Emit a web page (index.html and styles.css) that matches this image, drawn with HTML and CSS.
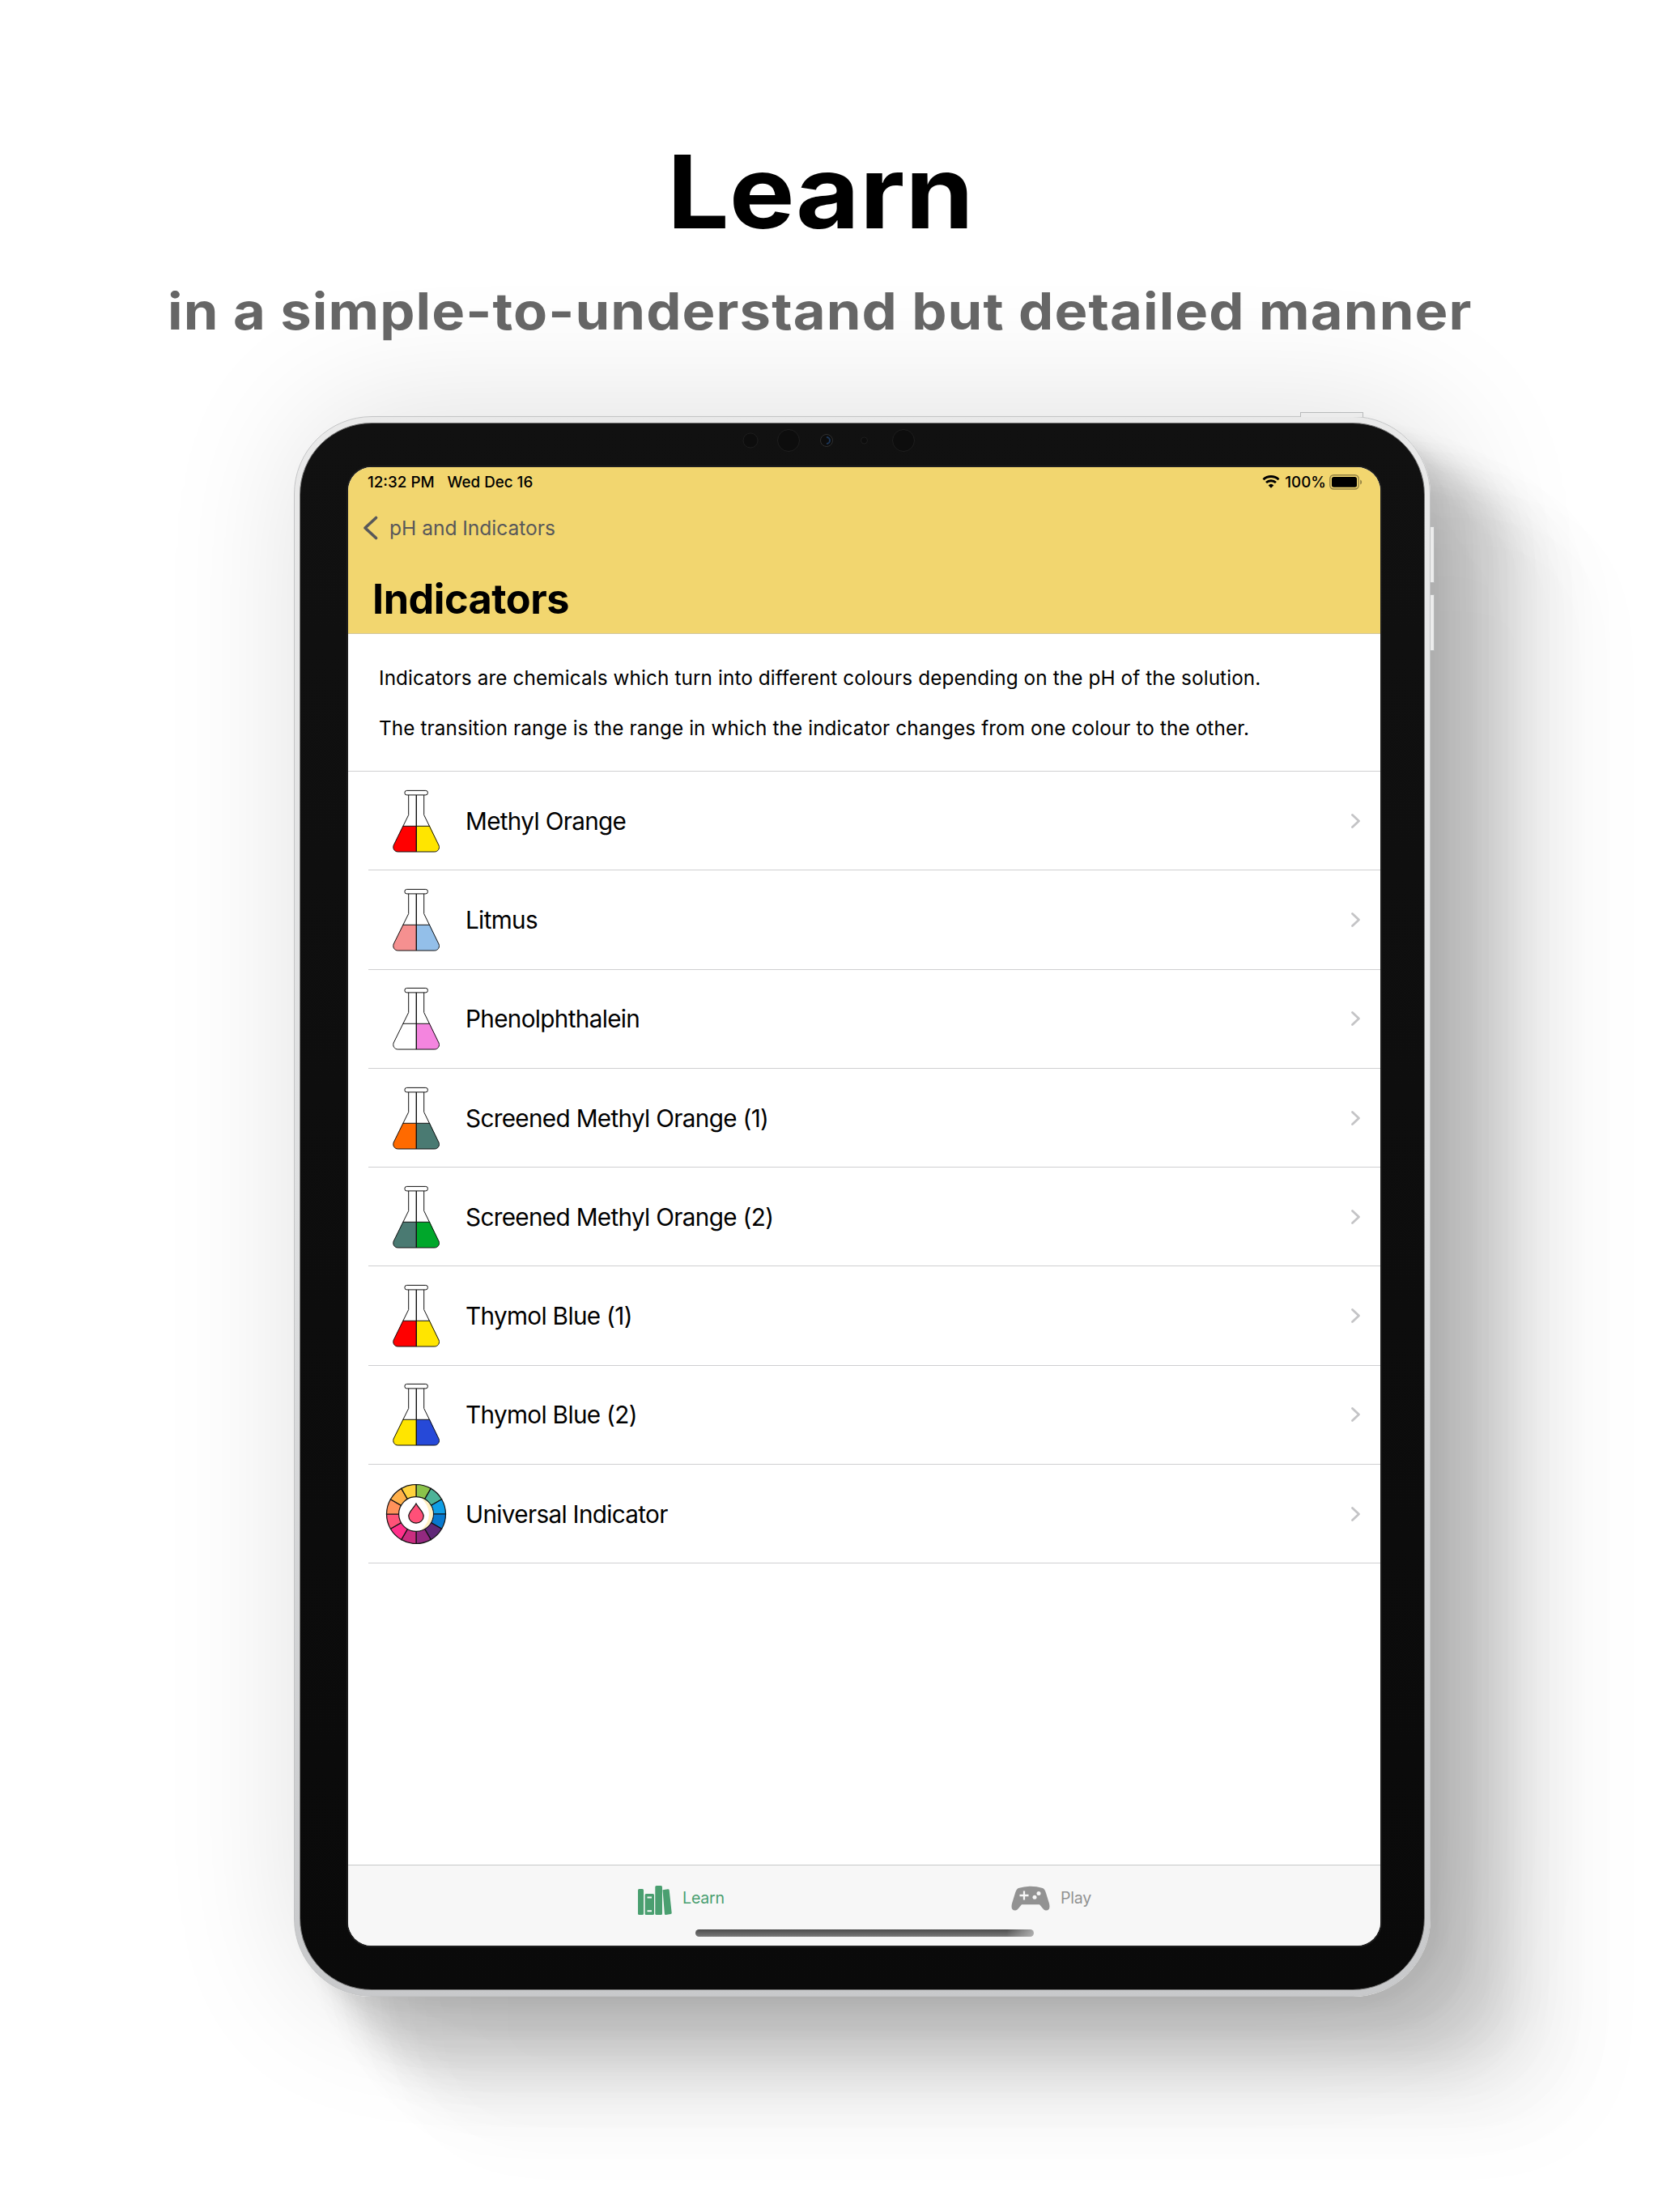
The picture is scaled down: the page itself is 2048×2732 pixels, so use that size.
FILE: index.html
```html
<!DOCTYPE html>
<html lang="en">
<head>
<meta charset="utf-8">
<title>Learn</title>
<link rel="stylesheet" href="styles.css">
</head>
<body>
<svg class="defs" width="0" height="0" aria-hidden="true">
  <symbol id="flask" viewBox="0 0 60 80">
    <path class="flask-left" d="M13.5 46.300H30.300V78H7.500C3 78 .8 73.500 2.200 70Z"/>
    <path class="flask-right" d="M30.300 46.300H47.100L58 70C59.600 73.500 57.200 78 52.800 78H30.300Z"/>
    <g fill="none" stroke="#111" stroke-width="1">
      <path d="M20.700 8V32.500L2.200 70C.8 73.500 3 78 7.500 78H52.800C57.200 78 59.600 73.500 58 70L39.700 32.500V8M13.500 46.300H47.100"/>
      <path d="M30.300 8V78" stroke-width="1.400"/>
      <rect x="15.900" y="2.400" width="28.500" height="5.500" rx="2.600" fill="#fff"/>
    </g>
  </symbol>
  <symbol id="chevron" viewBox="0 0 14 20"><path d="M2.500 2.500L10.500 10L2.500 17.500" fill="none" stroke="#c4c4c6" stroke-width="2.800" stroke-linecap="round" stroke-linejoin="round"/></symbol>
</svg>
<main class="page">
  <h1 class="headline"><span>Learn</span></h1>
  <p class="tagline"><span>in a simple-to-understand but detailed manner</span></p>
  <div class="tablet">
    <i class="button power"></i><i class="button volume-up"></i><i class="button volume-down"></i>
    <div class="bezel">
      <svg class="sensors" width="220" height="34" viewBox="0 0 220 34" aria-hidden="true">
        <g fill="#0d0d0d" stroke="#1e1e1e"><circle cx="16" cy="17" r="9"/><circle cx="63" cy="17" r="13.500"/><circle cx="110" cy="17" r="7.500" stroke="#303030"/><circle cx="156.500" cy="17" r="4"/><circle cx="205" cy="17" r="13.500"/></g>
        <path d="M110 13A4 4 0 0 1 110 21" fill="none" stroke="#1c3658" stroke-width="2"/>
      </svg>
      <div class="screen">
        <header class="header">
          <div class="status">
            <span class="time">12:32 PM</span><span class="date">Wed Dec 16</span>
            <svg class="wifi" width="22" height="16" viewBox="0 0 22 16"><path d="M1.500 5.200A14 14 0 0 1 20.500 5.200M5 9A9 9 0 0 1 17 9" fill="none" stroke="#000" stroke-width="2.900"/><path d="M11 15.800L7.700 12.400A4.800 4.800 0 0 1 14.300 12.400Z"/></svg>
            <span class="percent">100%</span>
            <svg class="battery" width="41" height="19" viewBox="0 0 41 19"><rect x=".8" y=".8" width="35.400" height="17.200" rx="4.500" fill="none" stroke="#000" stroke-opacity=".4" stroke-width="1.400"/><rect x="3" y="3" width="31" height="12.800" rx="2.500"/><path d="M38.200 6.500C40.800 7.500 40.800 11.500 38.200 12.500Z" fill-opacity=".4"/></svg>
          </div>
          <div class="back">
            <svg width="20" height="32" viewBox="0 0 20 32"><path d="M16.500 3.500L3 16L16.500 28.500" fill="none" stroke="#58585a" stroke-width="3.700" stroke-linecap="round" stroke-linejoin="round"/></svg>
            <span>pH and Indicators</span>
          </div>
          <h2 class="title"><span>Indicators</span></h2>
        </header>
        <section class="intro">
          <p><span>Indicators are chemicals which turn into different colours depending on the pH of the solution.</span></p>
          <p><span>The transition range is the range in which the indicator changes from one colour to the other.</span></p>
        </section>
        <ul class="list">
          <li class="row methyl"><svg class="flask"><use href="#flask"/></svg><span>Methyl Orange</span><svg class="chevron"><use href="#chevron"/></svg></li>
          <li class="row litmus"><svg class="flask"><use href="#flask"/></svg><span>Litmus</span><svg class="chevron"><use href="#chevron"/></svg></li>
          <li class="row phenol"><svg class="flask"><use href="#flask"/></svg><span>Phenolphthalein</span><svg class="chevron"><use href="#chevron"/></svg></li>
          <li class="row screened-one"><svg class="flask"><use href="#flask"/></svg><span>Screened Methyl Orange (1)</span><svg class="chevron"><use href="#chevron"/></svg></li>
          <li class="row screened-two"><svg class="flask"><use href="#flask"/></svg><span>Screened Methyl Orange (2)</span><svg class="chevron"><use href="#chevron"/></svg></li>
          <li class="row methyl"><svg class="flask"><use href="#flask"/></svg><span>Thymol Blue (1)</span><svg class="chevron"><use href="#chevron"/></svg></li>
          <li class="row thymol-two"><svg class="flask"><use href="#flask"/></svg><span>Thymol Blue (2)</span><svg class="chevron"><use href="#chevron"/></svg></li>
          <li class="row universal">
            <svg class="wheel" viewBox="-38 -38 76 76">
              <g stroke="#111" stroke-width="1.200">
                <path d="M0 0V-36.500A36.500 36.500 0 0 1 18.250 -31.610Z" fill="#8bc34a"/>
                <path d="M0 0V-36.500A36.500 36.500 0 0 1 18.250 -31.610Z" fill="#4db398" transform="rotate(30)"/>
                <path d="M0 0V-36.500A36.500 36.500 0 0 1 18.250 -31.610Z" fill="#109fe6" transform="rotate(60)"/>
                <path d="M0 0V-36.500A36.500 36.500 0 0 1 18.250 -31.610Z" fill="#0879cf" transform="rotate(90)"/>
                <path d="M0 0V-36.500A36.500 36.500 0 0 1 18.250 -31.610Z" fill="#602878" transform="rotate(120)"/>
                <path d="M0 0V-36.500A36.500 36.500 0 0 1 18.250 -31.610Z" fill="#932980" transform="rotate(150)"/>
                <path d="M0 0V-36.500A36.500 36.500 0 0 1 18.250 -31.610Z" fill="#ca2d80" transform="rotate(180)"/>
                <path d="M0 0V-36.500A36.500 36.500 0 0 1 18.250 -31.610Z" fill="#ff308a" transform="rotate(210)"/>
                <path d="M0 0V-36.500A36.500 36.500 0 0 1 18.250 -31.610Z" fill="#ff5378" transform="rotate(240)"/>
                <path d="M0 0V-36.500A36.500 36.500 0 0 1 18.250 -31.610Z" fill="#ff915a" transform="rotate(270)"/>
                <path d="M0 0V-36.500A36.500 36.500 0 0 1 18.250 -31.610Z" fill="#ffb04a" transform="rotate(300)"/>
                <path d="M0 0V-36.500A36.500 36.500 0 0 1 18.250 -31.610Z" fill="#ffd23c" transform="rotate(330)"/>
                <circle r="21.400" fill="#fff"/>
              </g>
              <path d="M6 -19.800A20.700 20.700 0 0 1 6 19.800Q15.500 12 16 0Q15.500 -12 6 -19.800Z" fill="#fff0c0"/>
              <path d="M0 -13C3 -7 9.200 -3 9.200 2.500A9.200 8.700 0 0 1 -9.200 2.500C-9.200 -3 -3 -7 0 -13Z" fill="#ff5078" stroke="#111" stroke-width="1.200"/>
            </svg>
            <span>Universal Indicator</span><svg class="chevron"><use href="#chevron"/></svg></li>
        </ul>
        <nav class="tabs">
          <div class="tab learn">
            <svg width="42" height="37" viewBox="0 0 42 37" fill="#4a9f70"><rect y="4" width="7" height="32" rx="1.500"/><path fill-rule="evenodd" d="M10 10H18.500Q20 10 20 11.500V34.500Q20 36 18.500 36H10Q8.600 36 8.600 34.500V11.500Q8.600 10 10 10ZM11.500 13.500V15.500H17V13.500ZM11.500 30.300V32.300H17V30.300Z"/><rect x="21.300" width="8.700" height="36" rx="1.500"/><path d="M30.500 5.200L37 4.300Q38.500 4.200 38.700 5.500L41.700 33.500Q41.900 34.800 40.500 35L34.500 36Q33 36.100 32.900 34.700Z"/></svg>
            <span>Learn</span>
          </div>
          <div class="tab play">
            <svg width="48" height="31" viewBox="0 0 48 31"><path d="M9 3Q24-1.500 39 3Q41.500 4 43 9L47 22Q49 31 42.500 30.500Q40.500 30.300 39 28L35 23.300H13L9 28Q7.500 30.300 5.500 30.500Q-1 31 1 22L5 9Q6.500 4 9 3Z" fill="#929292"/><path d="M16 6.500V17.500M10.500 12H21.500" stroke="#f7f7f7" stroke-width="2.300"/><circle cx="29" cy="14.300" r="2.500" fill="#f7f7f7"/><circle cx="34" cy="9.500" r="2.500" fill="#f7f7f7"/></svg>
            <span>Play</span>
          </div>
          <i class="home"></i>
        </nav>
      </div>
    </div>
  </div>
</main>
</body>
</html>
```
FILE: styles.css
```css
* { box-sizing: border-box; margin: 0; padding: 0; }
body { background: #fff; font-family: Inter, "Liberation Sans", sans-serif; color: #000; }
.defs { position: absolute; }
.page { width: 2048px; height: 2732px; overflow: hidden; display: flex; flex-direction: column; }
.page span { white-space: nowrap; }
.headline { height: 160px; margin: 157px 0 0 824px; font-size: 125px; line-height: 160px; font-weight: 700; }
.tagline { height: 80px; margin: 27px 0 0 207px; font-size: 63px; line-height: 80px; font-weight: 700; color: #666; position: relative; z-index: 1; }
.headline span, .tagline span { display: inline-block; transform-origin: left; }
.headline span { transform: scaleX(1.087); }
.tagline span { letter-spacing: 1px; transform: scaleX(1.09); }
.tablet {
  position: relative; width: 1404px; height: 1952px; margin: 90px 0 0 363px; padding: 7px 6px;
  border-radius: 96px; border: 1px solid #c3c4c5;
  background: linear-gradient(#e9e9e9, #dfe0e1 50%, #c8c9cb);
  box-shadow:
    12px 10px 16px 2px rgba(0,0,0,.035),
    36px 30px 28px 6px rgba(0,0,0,.035),
    58px 50px 40px 12px rgba(0,0,0,.045),
    80px 70px 48px 16px rgba(0,0,0,.05),
    102px 88px 56px 20px rgba(0,0,0,.045),
    126px 108px 66px 25px rgba(0,0,0,.035),
    154px 132px 80px 30px rgba(0,0,0,.025),
    184px 160px 96px 34px rgba(0,0,0,.015),
    14px 0 170px 6px rgba(0,0,0,.13);
}
.bezel { position: relative; height: 100%; padding: 54px 54px 54px 59px; border-radius: 89px; background: linear-gradient(#111, #0a0a0a); border: 1px solid #777; }
.sensors { position: absolute; left: 540px; top: 4px; }
.button { position: absolute; background: #ececec; border: 1px solid #b8babb; }
.power { left: 1242px; top: -6px; width: 78px; height: 6px; border-bottom: 0; }
.volume-up, .volume-down { left: 1403px; width: 5px; height: 70px; border-left: 0; }
.volume-up { top: 135px; }
.volume-down { top: 219px; }
.screen { height: 1826px; width: 1275px; border-radius: 29px; overflow: hidden; background: #fff; display: flex; flex-direction: column; box-shadow: 0 0 0 2px #1d1d1d; }
.header { height: 206px; flex: none; background: #f2d66f; border-bottom: 1px solid #d2c79c; }
.status { height: 36px; padding: 0 22px 0 24px; display: flex; align-items: center; font-size: 18.800px; font-weight: 500; }
.date { margin-left: 16px; }
.wifi { margin-left: auto; }
.percent { margin: 0 4px 0 6px; }
.back { height: 40px; margin-top: 19px; padding-left: 18px; display: flex; align-items: center; gap: 13px; font-size: 24.600px; color: #58585a; letter-spacing: -.04px; }
.title { margin: 37px 0 0 30px; font-size: 50.400px; line-height: 62px; font-weight: 700; letter-spacing: -.5px; }
.intro { height: 170px; flex: none; padding: 38px 0 0 38px; border-bottom: 1px solid #cfcfd1; font-size: 24.300px; line-height: 32px; letter-spacing: .11px; }
.intro p + p { margin-top: 30px; }
.list { list-style: none; flex: 1; }
.row { height: 122.300px; margin-left: 25px; padding: 0 23px 0 29px; border-bottom: 1px solid #cfcfd1; display: flex; align-items: center; font-size: 29.700px; letter-spacing: -.67px; }
.flask { width: 60px; height: 80px; margin-right: 31px; }
.wheel { width: 76px; height: 76px; margin: 0 23px 0 -8px; }
.chevron { width: 14px; height: 20px; margin-left: auto; }
.flask-left { fill: var(--left); }
.flask-right { fill: var(--right); }
.methyl { --left: #f00; --right: #ffe500; }
.litmus { --left: #f59090; --right: #93bfe9; }
.phenol { --left: #fff; --right: #f485df; }
.screened-one { --left: #ff6a00; --right: #4a7a72; }
.screened-two { --left: #4a7a72; --right: #00a72b; }
.thymol-two { --left: #ffe500; --right: #2649d8; }
.tabs { position: relative; height: 100px; flex: none; border-top: 1px solid #c7c8c9; background: #f7f7f7; font-size: 19.600px; letter-spacing: -.2px; }
.tabs { display: flex; padding: 24px 0 0 358px; }
.tab { height: 38px; display: flex; align-items: center; }
.tab span { position: relative; top: -3px; }
.learn { width: 461px; gap: 13px; color: #4a9f70; }
.play { height: 32px; gap: 13px; color: #929292; }
.play span { top: 0; }
.home { position: absolute; left: 429px; top: 79px; width: 418px; height: 9px; border-radius: 5px; background: linear-gradient(90deg, rgba(247,247,247,0) 92%, rgba(190,190,190,.8)), linear-gradient(#4c4c4c, #7a7a7a); }
```
